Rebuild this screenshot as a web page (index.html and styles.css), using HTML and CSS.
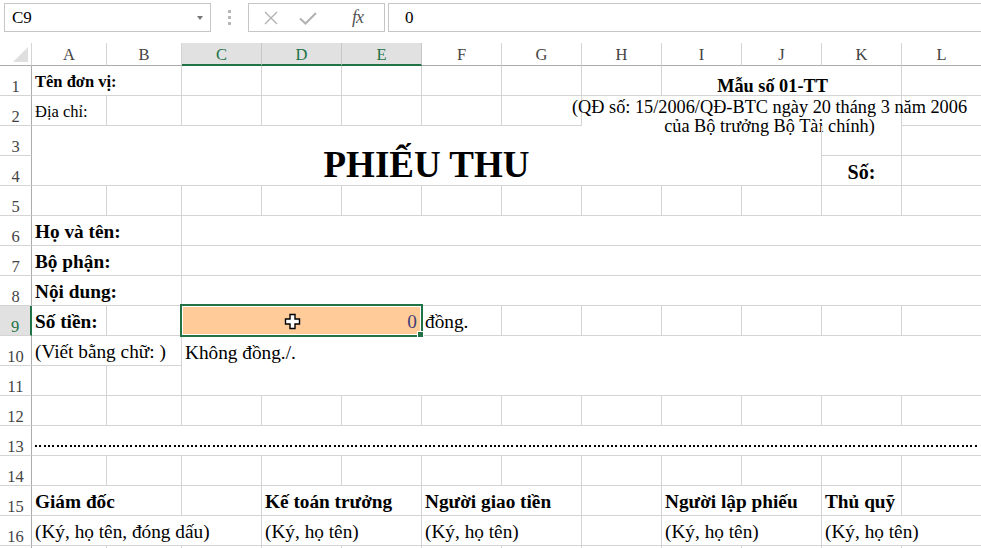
FILE: index.html
```html
<!DOCTYPE html>
<html lang="vi">
<head>
    <meta charset="UTF-8">
    <title>Phiếu thu</title>
    <link rel="stylesheet" href="styles.css">
</head>
<body>

    <div class="formula-bar">
        <div class="name-box">
            <span>C9</span>
            <span class="caret"></span>
        </div>
        <div class="grip"><i></i><i></i><i></i></div>
        <div class="fn-box">
            <svg class="btn-x" width="16" height="16" viewBox="0 0 16 16">
                <path d="M2 2 L14 14 M14 2 L2 14" stroke="#b3b3b3" stroke-width="1.4" fill="none"/>
            </svg>
            <svg class="btn-ok" width="20" height="16" viewBox="0 0 20 16">
                <path d="M2 8.5 L7.5 13.5 L18 3" stroke="#b3b3b3" stroke-width="2.2" fill="none"/>
            </svg>
            <span class="fx">fx</span>
        </div>
        <div class="fn-input">0</div>
    </div>

    <div class="sheet">
        <!-- column headers -->
        <div class="corner"><i></i></div>
        <div class="ch">A</div>
        <div class="ch">B</div>
        <div class="ch sel">C</div>
        <div class="ch sel">D</div>
        <div class="ch sel">E</div>
        <div class="ch">F</div>
        <div class="ch">G</div>
        <div class="ch">H</div>
        <div class="ch">I</div>
        <div class="ch">J</div>
        <div class="ch">K</div>
        <div class="ch">L</div>

        <!-- 1 -->
        <div class="rh">1</div>
        <div class="c w2 sm b">Tên đơn vị:</div>
        <div class="c"></div><div class="c"></div><div class="c"></div><div class="c"></div><div class="c"></div>
        <div class="c"></div>
        <div class="c w3 form-no">Mẫu số 01-TT</div>
        <div class="c"></div>

        <!-- 2 -->
        <div class="rh">2</div>
        <div class="c sm">Địa chỉ:</div>
        <div class="c"></div><div class="c"></div><div class="c"></div><div class="c"></div><div class="c"></div><div class="c"></div>
        <div class="c w4 nb decree">
            <div>(QĐ số: 15/2006/QĐ-BTC ngày 20 tháng 3 năm 2006</div>
            <div>của Bộ trưởng Bộ Tài chính)</div>
        </div>
        <div class="c"></div>

        <!-- 3, 4 -->
        <div class="rh">3</div>
        <div class="c w10 h2 title">PHIẾU THU</div>
        <div class="c"></div>
        <div class="c"></div>
        <div class="rh">4</div>
        <div class="c so">Số:</div>
        <div class="c"></div>

        <!-- 5 -->
        <div class="rh">5</div>
        <div class="c"></div><div class="c"></div><div class="c"></div><div class="c"></div><div class="c"></div><div class="c"></div>
        <div class="c"></div><div class="c"></div><div class="c"></div><div class="c"></div><div class="c"></div><div class="c"></div>

        <!-- 6 - 8 -->
        <div class="rh">6</div>
        <div class="c w2 b">Họ và tên:</div>
        <div class="c w10"></div>
        <div class="rh">7</div>
        <div class="c w2 b">Bộ phận:</div>
        <div class="c w10"></div>
        <div class="rh">8</div>
        <div class="c w2 b">Nội dung:</div>
        <div class="c w10"></div>

        <!-- 9 -->
        <div class="rh sel">9</div>
        <div class="c b">Số tiền:</div>
        <div class="c"></div>
        <div class="c w3 input-cell">
            0
            <svg class="cursor" width="17" height="17" viewBox="0 0 17 17">
                <path d="M6 1.5 H11 V6 H15.5 V11 H11 V15.5 H6 V11 H1.5 V6 H6 Z" fill="#fff" stroke="#000" stroke-width="1.4"/>
            </svg>
        </div>
        <div class="c">đồng.</div>
        <div class="c"></div><div class="c"></div><div class="c"></div><div class="c"></div><div class="c"></div><div class="c"></div>

        <!-- 10, 11 -->
        <div class="rh">10</div>
        <div class="c w2">(Viết bằng chữ: )</div>
        <div class="c w10 nb">Không đồng./.</div>
        <div class="rh">11</div>
        <div class="c"></div>
        <div class="c"></div>
        <div class="c w10"></div>

        <!-- 12 -->
        <div class="rh">12</div>
        <div class="c"></div><div class="c"></div><div class="c"></div><div class="c"></div><div class="c"></div><div class="c"></div>
        <div class="c"></div><div class="c"></div><div class="c"></div><div class="c"></div><div class="c"></div><div class="c"></div>

        <!-- 13 -->
        <div class="rh">13</div>
        <div class="c w12 cut"><div class="dots"></div></div>

        <!-- 14 -->
        <div class="rh">14</div>
        <div class="c"></div><div class="c"></div><div class="c"></div><div class="c"></div><div class="c"></div><div class="c"></div>
        <div class="c"></div><div class="c"></div><div class="c"></div><div class="c"></div><div class="c"></div><div class="c"></div>

        <!-- 15 -->
        <div class="rh">15</div>
        <div class="c w2 b">Giám đốc</div>
        <div class="c"></div>
        <div class="c w2 b">Kế toán trưởng</div>
        <div class="c w2 b">Người giao tiền</div>
        <div class="c"></div>
        <div class="c w2 b">Người lập phiếu</div>
        <div class="c b">Thủ quỹ</div>
        <div class="c"></div>

        <!-- 16 -->
        <div class="rh">16</div>
        <div class="c w3">(Ký, họ tên, đóng dấu)</div>
        <div class="c w2">(Ký, họ tên)</div>
        <div class="c w2">(Ký, họ tên)</div>
        <div class="c"></div>
        <div class="c w2">(Ký, họ tên)</div>
        <div class="c w2">(Ký, họ tên)</div>

        <!-- 17, only its top edge is in view -->
        <div class="rh"></div>
        <div class="c"></div><div class="c"></div><div class="c"></div><div class="c"></div><div class="c"></div><div class="c"></div>
        <div class="c"></div><div class="c"></div><div class="c"></div><div class="c"></div><div class="c"></div><div class="c"></div>
    </div>

</body>
</html>
```

FILE: styles.css
```css
body {
    margin: 0;
    height: 548px;
    overflow: hidden;
    background-color: #fff;
    font-family: "Liberation Serif", "Times New Roman", serif;
    color: #000;
}

/* formula bar */

.formula-bar {
    display: flex;
    align-items: flex-start;
    height: 43px;
    padding: 3px 0 0 4px;
    box-sizing: border-box;
}

.name-box {
    width: 207px;
    height: 29px;
    box-sizing: border-box;
    border: 1px solid #c6c6c6;
    display: flex;
    align-items: center;
    justify-content: space-between;
    padding: 0 7px 0 7px;
    font-size: 17px;
}

.caret {
    width: 0;
    height: 0;
    border-left: 3px solid transparent;
    border-right: 3px solid transparent;
    border-top: 4px solid #777;
}

.grip {
    width: 37px;
    height: 29px;
    display: flex;
    flex-direction: column;
    align-items: center;
    justify-content: center;
    gap: 3px;
}

.grip i {
    width: 3px;
    height: 3px;
    background-color: #b8b8b8;
}

.fn-box {
    width: 137px;
    height: 29px;
    box-sizing: border-box;
    border: 1px solid #c6c6c6;
    display: flex;
    align-items: center;
}

.btn-x {
    margin-left: 14px;
}

.btn-ok {
    margin-left: 19px;
}

.fx {
    margin-left: 34px;
    font-style: italic;
    font-size: 18px;
    color: #555;
    letter-spacing: -1px;
}

.fn-input {
    flex: 1;
    margin-left: 3px;
    height: 29px;
    box-sizing: border-box;
    border: 1px solid #c6c6c6;
    border-right: none;
    padding-left: 16px;
    font-size: 17px;
    line-height: 27px;
}

/* grid */

.sheet {
    display: grid;
    grid-template-columns: 32px 75px 75px repeat(10, 80px);
    grid-template-rows: 23px repeat(17, 30px);
}

.corner {
    box-sizing: border-box;
    border-right: 1px solid #d4d4d4;
    border-bottom: 1px solid #ababab;
    display: flex;
    justify-content: flex-end;
    align-items: flex-end;
    padding: 0 3px 3px 0;
}

.corner i {
    width: 0;
    height: 0;
    border-left: 15px solid transparent;
    border-bottom: 15px solid #dfdfdf;
}

.ch {
    box-sizing: border-box;
    border-right: 1px solid #d4d4d4;
    border-bottom: 1px solid #ababab;
    text-align: center;
    font-size: 16.5px;
    line-height: 21px;
    padding-top: 1px;
    color: #444;
}

.ch.sel {
    background-color: #e1e1e1;
    color: #217346;
    border-right-color: #c6c6c6;
    border-bottom: 2px solid #217346;
}

.rh {
    box-sizing: border-box;
    border-right: 1px solid #ababab;
    border-bottom: 1px solid #d4d4d4;
    display: flex;
    justify-content: center;
    align-items: flex-end;
    font-size: 16.5px;
    line-height: 17px;
    color: #444;
}

.rh.sel {
    background-color: #e1e1e1;
    color: #217346;
    border-right: 2px solid #217346;
}

.c {
    box-sizing: border-box;
    border-right: 1px solid #d4d4d4;
    border-bottom: 1px solid #d4d4d4;
    display: flex;
    align-items: flex-end;
    padding: 0 3px 3px 3px;
    white-space: nowrap;
    font-size: 19.3px;
    line-height: 20px;
    min-width: 0;
}

.w2 { grid-column: span 2; }
.w3 { grid-column: span 3; }
.w4 { grid-column: span 4; }
.w10 { grid-column: span 10; }
.w12 { grid-column: span 12; }
.h2 { grid-row: span 2; }

.nb {
    border-bottom: none;
}

.b {
    font-weight: bold;
}

.sm {
    font-size: 16.5px;
    line-height: 18px;
    padding-bottom: 4px;
}

.form-no {
    justify-content: center;
    padding: 0 18px 0 0;
    font-size: 18.3px;
    line-height: 18px;
    font-weight: bold;
}

.decree {
    flex-direction: column;
    align-items: center;
    justify-content: flex-start;
    padding: 2px 0 0 56px;
    font-size: 18.3px;
    line-height: 19px;
}

.title {
    justify-content: center;
    font-size: 37px;
    line-height: 40px;
    font-weight: bold;
    padding-bottom: 0;
}

.so {
    justify-content: center;
    font-size: 20px;
    font-weight: bold;
}

.input-cell {
    position: relative;
    z-index: 1;
    background-color: #ffcc99;
    border-color: transparent;
    justify-content: flex-end;
    padding-right: 4px;
    color: #3f3f76;
}

.input-cell::after {
    content: "";
    position: absolute;
    left: -2px;
    top: -2px;
    right: -2px;
    bottom: -2px;
    border: 2px solid #217346;
    box-shadow: inset 0 0 0 1px #fff;
}

.input-cell::before {
    content: "";
    position: absolute;
    right: -2px;
    bottom: -2px;
    width: 5px;
    height: 5px;
    background-color: #217346;
    box-shadow: 0 0 0 1px #fff;
    z-index: 1;
}

.cursor {
    position: absolute;
    left: 102px;
    top: 7px;
    z-index: 2;
}

.cut {
    padding-bottom: 8px;
}

.dots {
    flex: 1;
    height: 2px;
    background-image: repeating-linear-gradient(to right, #000 0, #000 2px, transparent 2px, transparent 4.33px);
}
```
